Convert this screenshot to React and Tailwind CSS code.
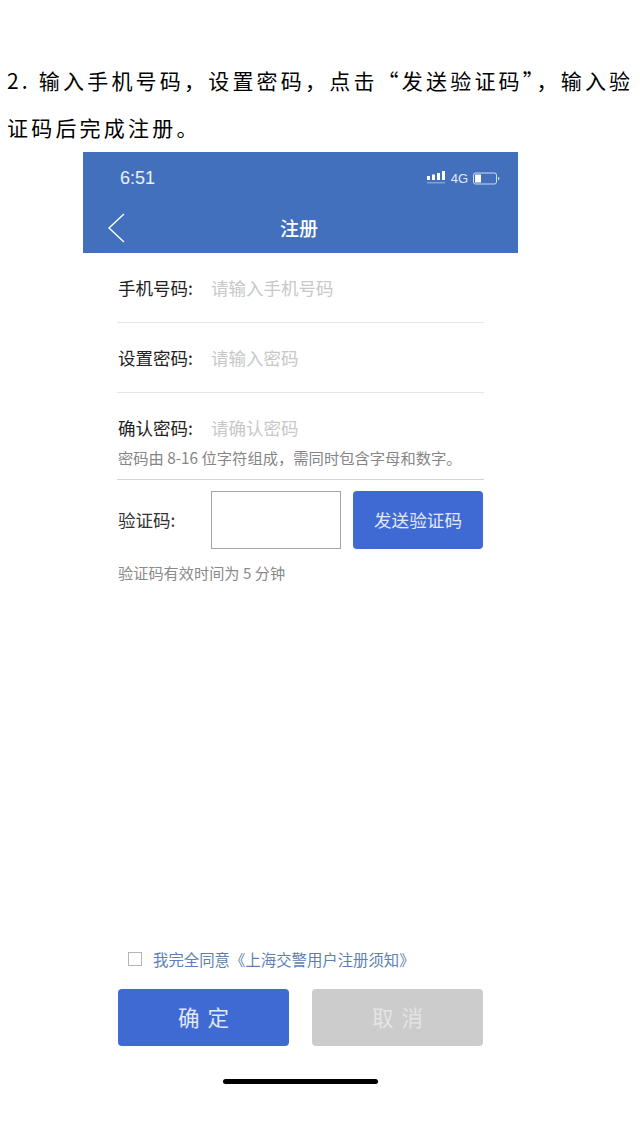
import React from "react";

const cjk = { fontFamily: '"Noto Sans CJK SC", sans-serif' };

function FormRow({ label, placeholder }) {
  return (
    <div className="flex h-[70px] items-start border-b border-[#e6e6e6] pt-[23px]">
      <span className="w-[94px] pl-[1px] text-[17.5px] leading-[24px] text-[#222]">{label}:</span>
      <span className="text-[17.5px] leading-[24px] text-[#c8c8c8]">{placeholder}</span>
    </div>
  );
}

function StatusIcons() {
  return (
    <div className="flex items-center gap-[5px]">
      <svg width="19" height="14" viewBox="0 0 19 14">
        <rect x="0" y="5" width="3" height="4" fill="#fff" />
        <rect x="5" y="3.5" width="3" height="5.5" fill="#fff" />
        <rect x="10" y="2" width="3" height="7" fill="#fff" />
        <rect x="15" y="0" width="3" height="9" fill="#fff" />
        <rect x="0" y="11" width="18" height="1.5" fill="#fff" opacity="0.35" />
      </svg>
      <span className="text-[13px] leading-none text-white/85" style={{ fontFamily: '"Liberation Sans", sans-serif' }}>
        4G
      </span>
      <svg width="27" height="13" viewBox="0 0 27 13">
        <rect x="0.5" y="1" width="23" height="11" rx="2" fill="none" stroke="#fff" strokeOpacity="0.75" />
        <rect x="2" y="2.5" width="6" height="8" fill="#fff" />
        <rect x="25" y="5" width="1.2" height="3" fill="#fff" opacity="0.7" />
      </svg>
    </div>
  );
}

export default function App() {
  return (
    <div className="h-[1139px] w-[640px] overflow-hidden bg-white" style={cjk}>
      <div className="whitespace-nowrap pl-[7px] pt-[57px] text-[21px] leading-[47px] tracking-[3.2px] text-black">
        <p>2. 输入手机号码，设置密码，点击“发送验证码”，输入验</p>
        <p>证码后完成注册。</p>
      </div>

      <div className="ml-[83px] mt-[1px] w-[435px]">
        <div className="h-[101px] bg-[#4270bd]">
          <div className="flex items-center justify-between pl-[37px] pr-[18px] pt-[14px]">
            <span className="text-[18px] leading-[24px] text-white/90" style={{ fontFamily: '"Liberation Sans", sans-serif' }}>
              6:51
            </span>
            <StatusIcons />
          </div>
          <div className="mt-[23px] flex items-center pl-[24px]">
            <svg width="20" height="30" viewBox="0 0 20 30" fill="none" stroke="#fff" strokeWidth="1.4">
              <path d="M17 1 L2 15 L17 29" />
            </svg>
            <span className="ml-[153px] text-[19px] font-medium leading-[30px] text-white">注册</span>
          </div>
        </div>

        <div className="ml-[34px] w-[367px]">
          <FormRow label="手机号码" placeholder="请输入手机号码" />
          <FormRow label="设置密码" placeholder="请输入密码" />
          <div className="h-[87px] border-b border-[#d4d4d4] pt-[23px]">
            <div className="flex items-start">
              <span className="w-[94px] pl-[1px] text-[17.5px] leading-[24px] text-[#222]">确认密码:</span>
              <span className="text-[17.5px] leading-[24px] text-[#c8c8c8]">请确认密码</span>
            </div>
            <p className="mt-[7px] pl-[1px] text-[15.3px] leading-[20px] text-[#858585]">密码由 8-16 位字符组成，需同时包含字母和数字。</p>
          </div>

          <div className="mt-[11px] flex items-center">
            <span className="w-[94px] pl-[1px] text-[17.5px] leading-[24px] text-[#333]">验证码:</span>
            <div className="h-[58px] w-[130px] border border-[#a6a6a6]" />
            <button className="ml-[12px] h-[58px] w-[130px] rounded-[4px] bg-[#3f69d3] text-[17.6px] text-white/85">发送验证码</button>
          </div>
          <p className="mt-[13px] pl-[1px] text-[15.2px] leading-[20px] text-[#8a8a8a]">验证码有效时间为 5 分钟</p>
        </div>

        <div className="ml-[45px] mt-[367px] flex items-center">
          <div className="h-[14px] w-[14px] border border-[#b5b5b5]" />
          <span className="ml-[11px] text-[15.4px] leading-[20px] text-[#5d7fb3]">我完全同意《上海交警用户注册须知》</span>
        </div>

        <div className="ml-[35px] mt-[20px] flex w-[365px] justify-between">
          <button className="h-[57px] w-[171px] rounded-[4px] bg-[#3f69d3] pl-[8px] text-[21.5px] tracking-[8px] text-white/85">确定</button>
          <button className="h-[57px] w-[171px] rounded-[4px] bg-[#cccccc] pl-[8px] text-[21.5px] tracking-[8px] text-[#e4e4e4]">取消</button>
        </div>

        <div className="ml-[140px] mt-[33px] h-[5px] w-[155px] rounded-full bg-black" />
      </div>
    </div>
  );
}
